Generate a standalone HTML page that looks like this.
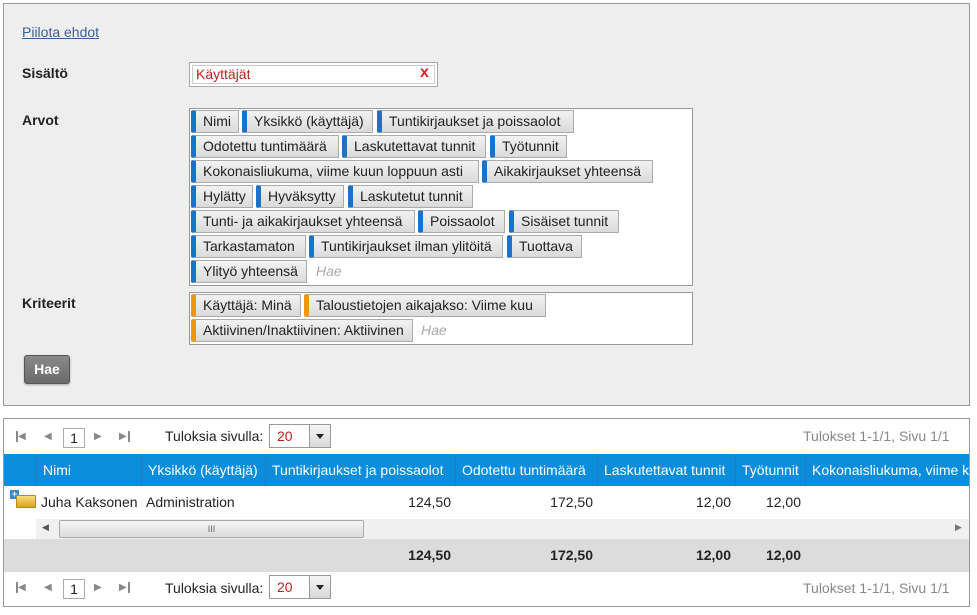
<!DOCTYPE html>
<html><head><meta charset="utf-8"><style>
*{box-sizing:border-box;margin:0;padding:0}
body{width:977px;height:615px;background:#fff;font-family:"Liberation Sans",Arial,sans-serif;font-size:14px;color:#222;position:relative;overflow:hidden}
.a{position:absolute}
#top{left:3px;top:3px;width:967px;height:403px;background:#eee;border:1px solid #999}
.lbl{font-weight:bold;font-size:14px;color:#222}
.box{background:#fff;border:1px solid #999}
.tag{position:absolute;height:23px;border:1px solid #aaa;border-left:5px solid #1a73c9;background:linear-gradient(#f2f2f2,#dadada);font-size:14px;line-height:21px;padding-left:7px;color:#222;white-space:nowrap;border-radius:2px 0 0 2px}
.tag.o{border-left-color:#f0960a}
.ph{position:absolute;color:#aaa;font-style:italic;font-size:14px}
#bot{left:3px;top:418px;width:967px;height:189px;border:1px solid #999;background:#fff}
.hd{position:absolute;top:35px;height:32px;background:#0a8ddb;color:#fff;line-height:32px;font-size:14px;border-left:1px solid #2a78b8;padding-left:6px;white-space:nowrap;overflow:hidden}
.num{position:absolute;text-align:right;font-size:14px}
.pg{position:absolute;font-size:14px;color:#888}
.ic{position:absolute;font-size:10px;color:#888;letter-spacing:-2px}
.sel{position:absolute;width:62px;height:24px;border:1px solid #999;background:#fff}
.sel span{position:absolute;left:7px;top:3px;color:#b22}
.sel i{position:absolute;right:0;top:0;width:21px;height:22px;border-left:1px solid #999;background:linear-gradient(#f5f5f5,#d8d8d8)}
.sel i:after{content:"";position:absolute;left:6px;top:9px;border:4px solid transparent;border-top:5px solid #222}
.pbox{position:absolute;width:22px;height:20px;border:1px solid #aaa;background:#fff;text-align:center;line-height:18px;font-size:14px;color:#222}
</style></head><body>
<div id="top" class="a"></div>
<a class="a" style="left:22px;top:24px;color:#3a5f95;text-decoration:underline;font-size:14px">Piilota ehdot</a>
<div class="a lbl" style="left:22px;top:65px">Sisältö</div>
<div class="a lbl" style="left:22px;top:112px">Arvot</div>
<div class="a lbl" style="left:22px;top:295px">Kriteerit</div>
<div class="a box" style="left:189px;top:62px;width:249px;height:25px;border-color:#aaa">
<div class="a" style="left:2px;top:2px;width:243px;height:19px;border:1px solid #ccc"></div>
<span class="a" style="left:6px;top:3px;color:#b22">Käyttäjät</span>
<span class="a" style="left:230px;top:1px;color:#d22;font-weight:bold;font-size:16px">x</span></div>
<div class="a box" style="left:189px;top:108px;width:504px;height:178px"></div>
<div class="tag" style="left:191px;top:110px;width:48px">Nimi</div>
<div class="tag" style="left:242px;top:110px;width:131px">Yksikkö (käyttäjä)</div>
<div class="tag" style="left:377px;top:110px;width:197px">Tuntikirjaukset ja poissaolot</div>
<div class="tag" style="left:191px;top:135px;width:148px">Odotettu tuntimäärä</div>
<div class="tag" style="left:342px;top:135px;width:144px">Laskutettavat tunnit</div>
<div class="tag" style="left:490px;top:135px;width:77px">Työtunnit</div>
<div class="tag" style="left:191px;top:160px;width:288px">Kokonaisliukuma, viime kuun loppuun asti</div>
<div class="tag" style="left:482px;top:160px;width:171px">Aikakirjaukset yhteensä</div>
<div class="tag" style="left:191px;top:185px;width:62px">Hylätty</div>
<div class="tag" style="left:256px;top:185px;width:88px">Hyväksytty</div>
<div class="tag" style="left:348px;top:185px;width:125px">Laskutetut tunnit</div>
<div class="tag" style="left:191px;top:210px;width:224px">Tunti- ja aikakirjaukset yhteensä</div>
<div class="tag" style="left:418px;top:210px;width:87px">Poissaolot</div>
<div class="tag" style="left:509px;top:210px;width:110px">Sisäiset tunnit</div>
<div class="tag" style="left:191px;top:235px;width:115px">Tarkastamaton</div>
<div class="tag" style="left:309px;top:235px;width:194px">Tuntikirjaukset ilman ylitöitä</div>
<div class="tag" style="left:507px;top:235px;width:75px">Tuottava</div>
<div class="tag" style="left:191px;top:260px;width:116px">Ylityö yhteensä</div>
<div class="ph" style="left:316px;top:263px">Hae</div>
<div class="a box" style="left:189px;top:292px;width:504px;height:53px"></div>
<div class="tag o" style="left:191px;top:294px;width:110px">Käyttäjä: Minä</div>
<div class="tag o" style="left:304px;top:294px;width:242px">Taloustietojen aikajakso: Viime kuu</div>
<div class="tag o" style="left:191px;top:319px;width:222px">Aktiivinen/Inaktiivinen: Aktiivinen</div>
<div class="ph" style="left:421px;top:322px">Hae</div>
<div class="a" style="left:24px;top:355px;width:46px;height:29px;background:linear-gradient(#8a8a8a,#6a6a6a);border:1px solid #555;border-radius:3px;color:#fff;font-weight:bold;text-align:center;line-height:27px;box-shadow:0 1px 2px rgba(0,0,0,.3)">Hae</div>

<div id="bot" class="a">
<div class="a" style="left:12px;top:12px;width:2px;height:11px;background:#888"></div><div class="ic" style="left:14px;top:12px">&#9664;</div>
<div class="ic" style="left:40px;top:12px">&#9664;</div>
<div class="pbox" style="left:59px;top:9px">1</div>
<div class="ic" style="left:90px;top:12px">&#9654;</div>
<div class="ic" style="left:115px;top:12px">&#9654;</div><div class="a" style="left:124px;top:12px;width:2px;height:11px;background:#888"></div>
<div class="a" style="left:161px;top:9px;color:#222">Tuloksia sivulla:</div>
<div class="sel" style="left:265px;top:5px"><span>20</span><i></i></div>
<div class="pg" style="left:799px;top:9px">Tulokset 1-1/1, Sivu 1/1</div>

<div class="a" style="left:0;top:35px;width:965px;height:32px;background:#0a8ddb"></div>
<div class="hd" style="left:32px;width:105px">Nimi</div>
<div class="hd" style="left:137px;width:124px">Yksikkö (käyttäjä)</div>
<div class="hd" style="left:261px;width:190px">Tuntikirjaukset ja poissaolot</div>
<div class="hd" style="left:451px;width:142px">Odotettu tuntimäärä</div>
<div class="hd" style="left:593px;width:138px">Laskutettavat tunnit</div>
<div class="hd" style="left:731px;width:70px">Työtunnit</div>
<div class="hd" style="left:801px;width:164px">Kokonaisliukuma, viime kuun</div>

<div class="a" style="left:6px;top:71px;width:9px;height:9px;background:#3a86d0;color:#fff;font-size:9px;line-height:8px;text-align:center;font-weight:bold">+</div>
<div class="a" style="left:12px;top:76px;width:20px;height:13px;background:linear-gradient(#f8dc7a,#d9a520);border:1px solid #b58a20;border-radius:1px"></div>
<div class="a" style="left:37px;top:75px">Juha Kaksonen</div>
<div class="a" style="left:142px;top:75px">Administration</div>
<div class="num" style="left:261px;width:186px;top:75px">124,50</div>
<div class="num" style="left:451px;width:138px;top:75px">172,50</div>
<div class="num" style="left:593px;width:134px;top:75px">12,00</div>
<div class="num" style="left:731px;width:66px;top:75px">12,00</div>

<div class="a" style="left:32px;top:100px;width:933px;height:20px;background:#f0f0f0"></div>
<div class="a" style="left:38px;top:103px;font-size:9px;color:#555">&#9664;</div>
<div class="a" style="left:55px;top:101px;width:305px;height:18px;border:1px solid #aaa;border-radius:2px;background:linear-gradient(#f4f4f4,#dcdcdc);text-align:center;font-size:9px;line-height:16px;color:#666">III</div>
<div class="a" style="left:951px;top:103px;font-size:9px;color:#777">&#9654;</div>

<div class="a" style="left:0;top:120px;width:965px;height:33px;background:#dcdcdc"></div>
<div class="num" style="left:261px;width:186px;top:128px;font-weight:bold">124,50</div>
<div class="num" style="left:451px;width:138px;top:128px;font-weight:bold">172,50</div>
<div class="num" style="left:593px;width:134px;top:128px;font-weight:bold">12,00</div>
<div class="num" style="left:731px;width:66px;top:128px;font-weight:bold">12,00</div>

<div class="a" style="left:12px;top:163px;width:2px;height:11px;background:#888"></div><div class="ic" style="left:14px;top:163px">&#9664;</div>
<div class="ic" style="left:40px;top:163px">&#9664;</div>
<div class="pbox" style="left:59px;top:160px">1</div>
<div class="ic" style="left:90px;top:163px">&#9654;</div>
<div class="ic" style="left:115px;top:163px">&#9654;</div><div class="a" style="left:124px;top:163px;width:2px;height:11px;background:#888"></div>
<div class="a" style="left:161px;top:161px;color:#222">Tuloksia sivulla:</div>
<div class="sel" style="left:265px;top:156px"><span>20</span><i></i></div>
<div class="pg" style="left:799px;top:161px">Tulokset 1-1/1, Sivu 1/1</div>
</div>
</body></html>
